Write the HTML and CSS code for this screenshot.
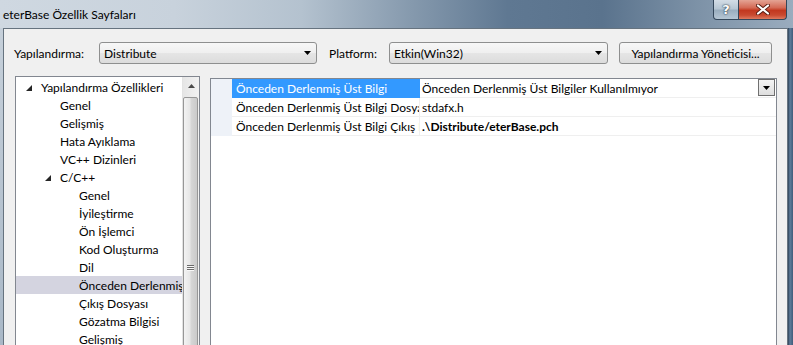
FILE: index.html
```html
<!DOCTYPE html>
<html lang="tr">
<head>
<meta charset="utf-8">
<title>eterBase Özellik Sayfaları</title>
<link rel="stylesheet" href="styles.css">
</head>
<body>
<div class="window">
  <div class="titlebar">
    <span class="title">eterBase Özellik Sayfaları</span>
    <div class="caption">
      <div class="cbtn help"><span class="q">?</span></div>
      <div class="cbtn close">
        <svg width="14" height="11" viewBox="0 0 14 11"><path d="M2 1.5 L12 9.5 M12 1.5 L2 9.5" stroke="#5a1d12" stroke-width="4" stroke-linecap="round"/><path d="M2 1.5 L12 9.5 M12 1.5 L2 9.5" stroke="#fff" stroke-width="2.2" stroke-linecap="round"/></svg>
      </div>
    </div>
  </div>
  <div class="frame-row">
    <div class="frame-left"></div>
    <div class="client">
      <div class="toolbar">
        <span class="lbl lbl-config">Yapılandırma:</span>
        <div class="combo combo-config"><span>Distribute</span><svg class="carrow" width="7" height="4" viewBox="0 0 7 4"><polygon points="0,0 7,0 3.5,4" fill="#000"/></svg></div>
        <span class="lbl lbl-platform">Platform:</span>
        <div class="combo combo-platform"><span>Etkin(Win32)</span><svg class="carrow" width="7" height="4" viewBox="0 0 7 4"><polygon points="0,0 7,0 3.5,4" fill="#000"/></svg></div>
        <div class="btn">Yapılandırma Yöneticisi...</div>
      </div>
      <div class="main">
        <div class="tree">
          <div class="tree-items">
            <div class="ti l0"><span class="exp"><svg width="6" height="6" viewBox="0 0 6 6"><polygon points="6,0 6,6 0,6" fill="#262626"/></svg></span>Yapılandırma Özellikleri</div>
            <div class="ti l1"><span class="exp"></span>Genel</div>
            <div class="ti l1"><span class="exp"></span>Gelişmiş</div>
            <div class="ti l1"><span class="exp"></span>Hata Ayıklama</div>
            <div class="ti l1"><span class="exp"></span>VC++ Dizinleri</div>
            <div class="ti l1"><span class="exp"><svg width="6" height="6" viewBox="0 0 6 6"><polygon points="6,0 6,6 0,6" fill="#262626"/></svg></span>C/C++</div>
            <div class="ti l2"><span class="exp"></span>Genel</div>
            <div class="ti l2"><span class="exp"></span>İyileştirme</div>
            <div class="ti l2"><span class="exp"></span>Ön İşlemci</div>
            <div class="ti l2"><span class="exp"></span>Kod Oluşturma</div>
            <div class="ti l2"><span class="exp"></span>Dil</div>
            <div class="ti l2 sel"><span class="exp"></span>Önceden Derlenmiş Üst Bilgiler</div>
            <div class="ti l2"><span class="exp"></span>Çıkış Dosyası</div>
            <div class="ti l2"><span class="exp"></span>Gözatma Bilgisi</div>
            <div class="ti l2"><span class="exp"></span>Gelişmiş</div>
          </div>
          <div class="vscroll">
            <div class="sb-up"><svg width="7" height="4" viewBox="0 0 7 4"><polygon points="3.5,0 7,4 0,4" fill="#4a4a4a"/></svg></div>
            <div class="thumb"><div class="grip"><i></i><i></i><i></i></div></div>
          </div>
        </div>
        <div class="panel">
          <div class="prow">
            <div class="pmargin"></div>
            <div class="pname selected">Önceden Derlenmiş Üst Bilgi</div>
            <div class="pvalue"><span>Önceden Derlenmiş Üst Bilgiler Kullanılmıyor</span>
              <div class="ddbtn"><svg width="7" height="4" viewBox="0 0 7 4"><polygon points="0,0 7,0 3.5,4" fill="#000"/></svg></div>
            </div>
          </div>
          <div class="prow">
            <div class="pmargin"></div>
            <div class="pname">Önceden Derlenmiş Üst Bilgi Dosyası</div>
            <div class="pvalue"><span>stdafx.h</span></div>
          </div>
          <div class="prow">
            <div class="pmargin"></div>
            <div class="pname">Önceden Derlenmiş Üst Bilgi Çıkış Dosyası</div>
            <div class="pvalue"><span class="bold">.\Distribute/eterBase.pch</span></div>
          </div>
        </div>
      </div>
    </div>
    <div class="frame-right"></div>
  </div>
</div>
</body>
</html>
```
FILE: styles.css
```css
* { box-sizing: border-box; }
html, body { margin: 0; padding: 0; }
body {
  width: 793px;
  height: 345px;
  overflow: hidden;
  font-family: Lato, "Noto Sans", sans-serif;
  font-size: 12px;
  color: #000;
  background: #5a7189;
}
.window { display: flex; flex-direction: column; height: 345px; }

/* title bar */
.titlebar {
  height: 28px;
  flex: none;
  display: flex;
  justify-content: space-between;
  align-items: flex-start;
  padding: 0 6px 0 3px;
  background: linear-gradient(90deg, #cfd8e1 0%, #c8d2dc 22%, #b4c2cf 38%, #8599ad 52%, #5f7892 64%, #5a738d 76%, #7d92a7 88%, #9aacbe 100%);
  overflow: hidden;
}
.title { line-height: 30px; white-space: nowrap; }
.caption { display: flex; }
.cbtn {
  height: 20px;
  border: 1px solid #34475a;
  border-top: none;
  display: flex;
  align-items: center;
  justify-content: center;
}
.help {
  width: 26px;
  border-radius: 0 0 0 4px;
  background: linear-gradient(180deg, #d3dde6 0%, #b8c7d4 45%, #9aaebf 55%, #b6c6d4 100%);
}
.q {
  font-family: "DejaVu Sans", sans-serif;
  font-weight: bold;
  font-size: 13px;
  color: #fff;
  text-shadow: 0 0 2px #22313f, 0 0 1px #22313f;
  line-height: 1;
}
.close {
  width: 48px;
  border-left: none;
  border-radius: 0 0 4px 0;
  background: linear-gradient(180deg, #e4a394 0%, #d46a56 40%, #c2381f 55%, #c94a30 80%, #de7a5f 100%);
}

/* frame */
.frame-row { flex: 1; display: flex; min-height: 0; }
.frame-left { width: 3px; flex: none; background: linear-gradient(180deg, #c6d0da, #a9b8c7); }
.frame-right { width: 5px; flex: none; background: linear-gradient(90deg, #2d4258 0%, #5f7d9b 40%, #3f5c7a 100%); }
.client {
  width: 785px;
  flex: none;
  border: 1px solid #66737f;
  border-bottom: none;
  background: #f0f0f0;
  overflow: hidden;
}

/* toolbar */
.toolbar {
  display: flex;
  align-items: center;
  padding: 13px 0 0 10px;
  height: 35px;
}
.lbl { white-space: nowrap; flex: none; }
.lbl-config { width: 85px; }
.lbl-platform { width: 60px; }
.combo, .btn {
  height: 22px;
  flex: none;
  border: 1px solid #8e8f8f;
  border-radius: 3px;
  background: linear-gradient(180deg, #f7f7f7 0%, #efefef 50%, #e5e5e5 51%, #dcdcdc 100%);
  display: flex;
  align-items: center;
  white-space: nowrap;
}
.combo { justify-content: space-between; padding: 0 5px 0 4px; }
.combo-config { width: 218px; margin-right: 12px; }
.combo-platform { width: 219px; margin-right: 11px; }
.btn { width: 153px; justify-content: center; }

/* main area */
.main {
  display: flex;
  align-items: flex-start;
  padding-left: 11px;
  margin-top: 12px;
}
.tree {
  width: 185px;
  height: 300px;
  flex: none;
  border: 1px solid #828790;
  background: #fff;
  display: flex;
}
.tree-items { flex: 1; min-width: 0; padding-top: 1px; }
.ti {
  height: 18px;
  display: flex;
  align-items: center;
  white-space: nowrap;
  overflow: hidden;
}
.ti.l0 { padding-left: 6px; }
.ti.l1 { padding-left: 25px; }
.ti.l2 { padding-left: 44px; }
.exp {
  width: 19px;
  flex: none;
  display: flex;
  align-items: center;
  padding-left: 4px;
  padding-top: 1px;
}
.ti.sel { background: #d4d4e0; }

.vscroll {
  width: 17px;
  flex: none;
  background: linear-gradient(90deg, #e6e6e6, #f2f2f2);
  border-left: 1px solid #e3e3e3;
}
.sb-up { height: 17px; display: flex; align-items: center; justify-content: center; }
.thumb {
  margin: 3px 1px 0 0;
  height: 270px;
  border: 1px solid #979797;
  border-radius: 2px;
  background: linear-gradient(90deg, #f3f3f3 0%, #e7e7e7 45%, #d6d6d6 55%, #cacaca 100%);
  display: flex;
  justify-content: center;
}
.grip { margin-top: 167px; display: flex; flex-direction: column; gap: 1px; }
.grip i { display: block; width: 7px; height: 1px; background: #6a6a6a; box-shadow: 0 1px 0 #f8f8f8; }

.panel {
  width: 567px;
  height: 300px;
  flex: none;
  margin: 2px 0 0 10px;
  border: 1px solid #828790;
  background: #fff;
}
.prow { display: flex; height: 19px; }
.pmargin { width: 21px; flex: none; background: #eef2f8; }
.pname {
  width: 188px;
  flex: none;
  padding-left: 4px;
  border-bottom: 1px solid #efefef;
  border-right: 1px solid #efefef;
  white-space: nowrap;
  overflow: hidden;
  display: flex;
  align-items: center;
}
.pname.selected { background: #3399ff; color: #fff; border-color: #3399ff; }
.pvalue {
  flex: 1;
  min-width: 0;
  padding-left: 2px;
  border-bottom: 1px solid #efefef;
  display: flex;
  align-items: center;
  justify-content: space-between;
  white-space: nowrap;
}
.bold { font-weight: bold; }
.ddbtn {
  width: 17px;
  height: 17px;
  margin: 0 1px 1px 0;
  align-self: flex-start;
  border: 1px solid #707070;
  background: linear-gradient(180deg, #f4f4f4, #dedede);
  display: flex;
  align-items: center;
  justify-content: center;
}
```
